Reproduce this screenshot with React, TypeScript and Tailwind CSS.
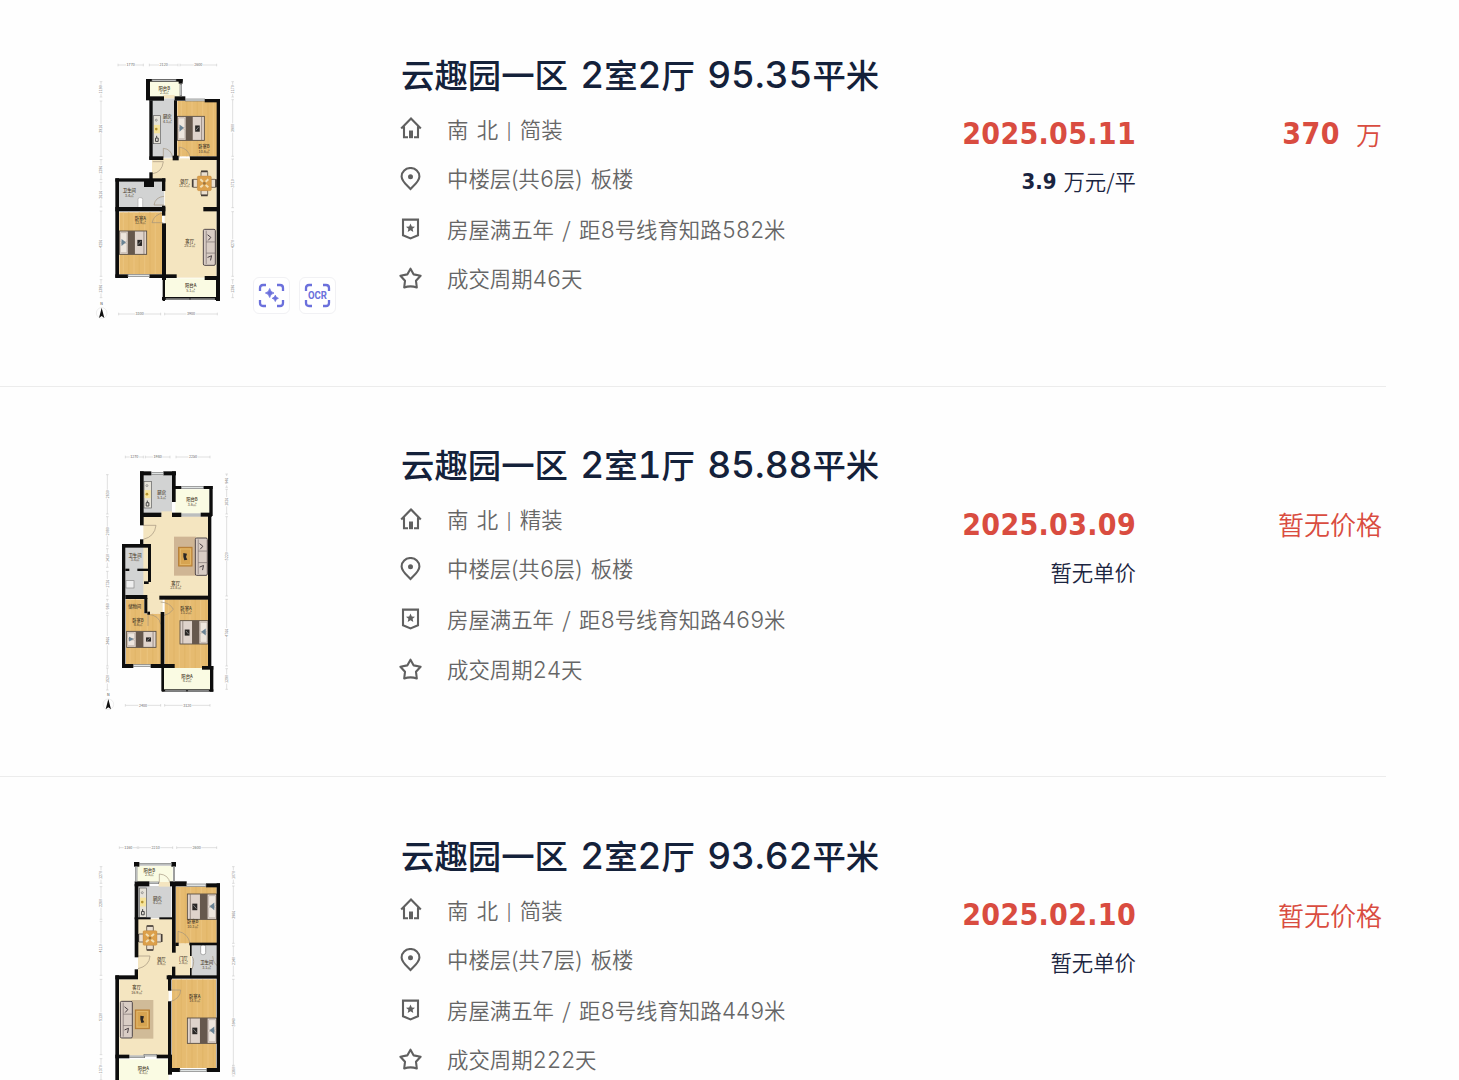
import { Fragment, type ReactNode } from "react";

type House = {
  id: number;
  title: string;
  orientation: string;
  floor: string;
  tags: string;
  cycle: string;
  date: string;
  price?: string;
  unitPrice?: string;
  plan: ReactNode;
};

const WALL = "#0d0d0d";
const WOOD = "#e6bb70";
const CREAM = "#f4e5c0";
const TILE = "#d2d3d3";
const BALCONY = "#fafbe3";

type Box = { x: number; y: number; w: number; h: number };

function Rects({ fill, list }: { fill: string; list: number[][] }) {
  return (
    <g fill={fill}>
      {list.map(([x, y, w, h], i) => (
        <rect key={i} x={x} y={y} width={w} height={h} />
      ))}
    </g>
  );
}

// Wood floor with thin vertical boards
function Wood({ x, y, w, h }: Box) {
  const boards = Array.from({ length: Math.floor(w / 16) }, (_, i) => x + 12 + i * 16);
  return (
    <g>
      <rect x={x} y={y} width={w} height={h} fill={WOOD} />
      {boards.map((bx, i) => (
        <path key={bx} d={`M${bx} ${y}V${y + h}`} stroke={i % 2 ? "#e0b365" : "#eec783"} strokeWidth="4" opacity="0.6" />
      ))}
    </g>
  );
}

// Window cut into a wall
function Windows({ list }: { list: number[][] }) {
  return (
    <g fill="#dfe3e3" stroke="#777" strokeWidth="2">
      {list.map(([x, y, w, h], i) => (
        <rect key={i} x={x} y={y} width={w} height={h} />
      ))}
    </g>
  );
}

// The bed is drawn with the pillows on the left, flip puts them on the right
function Bed({ x, y, w, h, flip }: Box & { flip?: boolean }) {
  return (
    <g transform={flip ? `translate(${x + w} ${y}) scale(-1 1)` : `translate(${x} ${y})`}>
      <rect width={w} height={h} fill="#dfd3cb" stroke="#4f463e" strokeWidth="2.5" />
      <rect x="3" y="5" width={w * 0.24} height={h / 2 - 7} rx="3" fill="#eee6de" stroke="#8e8176" />
      <rect x="3" y={h / 2 + 2} width={w * 0.24} height={h / 2 - 7} rx="3" fill="#eee6de" stroke="#8e8176" />
      <path d={`M${w * 0.08} ${h * 0.34}l${w * 0.16} ${h * 0.14}l-${w * 0.16} ${h * 0.16}z`} fill="#6b8496" />
      <rect x={w * 0.31} width={w * 0.26} height={h} fill="#66584d" />
      <rect x={w * 0.66} y={h * 0.38} width={w * 0.17} height={h * 0.26} fill="#292625" />
      <path d={`M${w * 0.69} ${h * 0.58}l${w * 0.1} -${h * 0.14}`} stroke="#aaa" strokeWidth="2" />
      <path d={`M${w * 0.9} 0V${h}`} stroke="#776a61" strokeWidth="2" />
    </g>
  );
}

function Sofa({ x, y, w, h }: Box) {
  return (
    <g transform={`translate(${x} ${y})`}>
      <rect width={w} height={h} rx="4" fill="#d9cdc5" stroke="#51484a" strokeWidth="3" />
      <path d={`M${w * 0.24} 4V${h - 4}M${w * 0.24} ${h * 0.35}H${w}M${w * 0.24} ${h * 0.66}H${w}`} stroke="#776c6c" strokeWidth="2" fill="none" />
      <path d={`M${w * 0.35} ${h * 0.15}l10 8l-8 9M${w * 0.35} ${h * 0.78}l12 -5l-3 14`} stroke="#494044" strokeWidth="3" fill="none" />
    </g>
  );
}

function DiningTable({ x, y }: { x: number; y: number }) {
  return (
    <g transform={`translate(${x} ${y})`}>
      <g fill="#eadfd0" stroke="#625447" strokeWidth="2.5">
        <rect x="-10" y="-36" width="20" height="16" rx="3" />
        <rect x="-10" y="20" width="20" height="16" rx="3" />
        <rect x="-35" y="-12" width="16" height="24" rx="3" />
        <rect x="19" y="-12" width="16" height="24" rx="3" />
      </g>
      <path d="M-10 -36h20M-10 36h20M-35 -12v24M35 -12v24" stroke="#463e38" strokeWidth="5" />
      <rect x="-21" y="-22" width="42" height="44" rx="4" fill="#dca04c" stroke="#bd7c32" />
      <path d="M-12 -12l8 7M12 -12l-8 7M-12 12l8 -7M12 12l-8 -7" stroke="#f1dfb5" strokeWidth="6" />
      <circle r="4" fill="#9b7643" />
    </g>
  );
}

function CoffeeTable({ x, y, w, h }: Box) {
  return (
    <g>
      <rect x={x} y={y} width={w} height={h} fill="#d7a451" stroke="#b37a30" strokeWidth="3" />
      <rect x={x + 5} y={y + 5} width={w - 10} height={h - 10} fill="none" stroke="#e8bf75" strokeWidth="2" />
      <path d={`M${x + w / 2 - 6} ${y + h / 2 - 11}l11 2l-3 10l4 8l-9 2l-3 -11z`} fill="#2b2725" />
    </g>
  );
}

function Stove({ x, y, w, h }: Box) {
  return (
    <g transform={`translate(${x} ${y})`}>
      <rect width={w} height={h} fill="#e6e3d9" stroke="#5c5c5c" strokeWidth="2" />
      <rect x="2" y={h * 0.33} width={w - 4} height={h * 0.3} fill="#f7e49b" />
      <circle cx={w * 0.4} cy={h * 0.48} r="4" fill="#b6942f" />
      <circle cx={w * 0.4} cy={h * 0.16} r="3" fill="none" stroke="#777" strokeWidth="2" />
      <path d={`M${w * 0.45} ${h * 0.72}v6M${w * 0.3} ${h * 0.8}h8v10h-8z`} stroke="#444" strokeWidth="3" fill="none" />
    </g>
  );
}

function Doors({ d }: { d: string }) {
  return <path d={d} fill="none" stroke="#a1927c" strokeWidth="2" />;
}

function Labels({ list }: { list: [number, number, string, string][] }) {
  return (
    <g fill="#4b3d2c" fontSize="13" textAnchor="middle">
      {list.map(([x, y, name, area]) => (
        <Fragment key={name + x + y}>
          <text x={x} y={y} fontWeight="500">
            {name}
          </text>
          <text x={x} y={y + 13} fontSize="11">
            {area}
          </text>
        </Fragment>
      ))}
    </g>
  );
}

type Span = [number, number, string];

type DimProps = {
  top: Span[];
  bottom?: Span[];
  left: Span[];
  right: Span[];
  leftX: number;
  rightX: number;
  topY: number;
  bottomY?: number;
};

// Measure lines around the plan
function Dimensions({ top, bottom = [], left, right, leftX, rightX, topY, bottomY = 777 }: DimProps) {
  const horizontal = (items: Span[], y: number) =>
    items.map(([from, to, label]) => {
      const mid = (from + to) / 2;
      return (
        <g key={`${from}-${y}`}>
          <path d={`M${from} ${y}H${mid - 14}M${mid + 14} ${y}H${to}M${from} ${y - 4}v8M${to} ${y - 4}v8`} />
          <text x={mid} y={y + 4}>
            {label}
          </text>
        </g>
      );
    });
  const vertical = (items: Span[], x: number) =>
    items.map(([from, to, label]) => {
      const mid = (from + to) / 2;
      return (
        <g key={`${from}-${x}`}>
          <path d={`M${x} ${from}V${mid - 14}M${x} ${mid + 14}V${to}M${x - 4} ${from}h8M${x - 4} ${to}h8`} />
          <text transform={`translate(${x + 4} ${mid}) rotate(-90)`}>{label}</text>
        </g>
      );
    });
  return (
    <g stroke="#c2c2c2" strokeWidth="1.5" fontSize="11" textAnchor="middle" className="[&_text]:fill-[#666] [&_text]:stroke-none">
      {horizontal(top, topY)}
      {horizontal(bottom, bottomY)}
      {vertical(left, leftX)}
      {vertical(right, rightX)}
    </g>
  );
}

function Compass({ x, y }: { x: number; y: number }) {
  return (
    <g transform={`translate(${x} ${y})`}>
      <circle r="16" fill="none" stroke="#ddd" strokeWidth="1.5" />
      <path d="M0 -16L8 15L0 9L-8 15z" fill="#111" />
      <text y="-24" textAnchor="middle" fontSize="11" fill="#333">
        N
      </text>
    </g>
  );
}

function PlanOne() {
  return (
    <>
      <Rects fill={BALCONY} list={[[178, 78, 94, 50], [222, 670, 160, 60]]} />
      <Rects fill={TILE} list={[[186, 130, 70, 178], [86, 380, 136, 78]]} />
      <Rects fill={CREAM} list={[[186, 310, 194, 65], [224, 370, 156, 298], [220, 120, 34, 10]]} />
      <Wood x={262} y={138} w={120} h={166} />
      <Wood x={88} y={472} w={128} h={186} />
      <Stove x={190} y={182} w={22} h={84} />
      <Bed x={262} y={184} w={81} h={72} />
      <Bed x={88} y={528} w={82} h={70} />
      <DiningTable x={343} y={385} />
      <Sofa x={340} y={523} w={36} h={108} />
      <rect x="144" y="428" width="14" height="32" rx="5" fill="#fff" stroke="#aaa" strokeWidth="2" />
      <Doors d="M220 308V280Q244 282 248 308M268 308V276Q298 282 300 308M188 356Q216 352 220 320H188M222 424Q196 426 192 450H222M220 474Q192 478 186 503H220" />
      <Rects
        fill={WALL}
        list={[
          [168, 72, 12, 64], [168, 72, 110, 8], [266, 72, 12, 14], [178, 124, 44, 13], [254, 124, 32, 13], [344, 132, 46, 10],
          [178, 136, 10, 178], [252, 136, 9, 172], [380, 132, 10, 592], [178, 304, 42, 11], [248, 302, 18, 14], [300, 304, 90, 11],
          [178, 352, 10, 24], [76, 370, 150, 10], [76, 370, 11, 298], [162, 378, 30, 18], [216, 370, 10, 38], [76, 456, 150, 13],
          [216, 452, 10, 30], [340, 456, 48, 13], [216, 505, 12, 170], [76, 658, 38, 11], [178, 658, 82, 11], [344, 663, 46, 12],
          [218, 670, 7, 68], [216, 726, 174, 9], [378, 670, 12, 68],
        ]}
      />
      <Windows list={[[186, 74, 72, 4], [286, 132, 58, 6], [270, 88, 5, 34], [114, 658, 64, 7], [228, 731, 70, 3], [302, 731, 72, 3]]} />
      <Labels
        list={[
          [223, 104, "阳台B", "2.3㎡"], [232, 190, "厨房", "4.1㎡"], [342, 280, "卧室B", "10.6㎡"], [283, 384, "餐厅", "12.2㎡"],
          [118, 412, "卫生间", "3.4㎡"], [151, 495, "卧室A", "12.9㎡"], [299, 564, "客厅", "25.2㎡"], [302, 697, "阳台A", "5.1㎡"],
        ]}
      />
      <Dimensions
        topY={30}
        leftX={33}
        rightX={428}
        top={[[84, 160, "1770"], [178, 264, "2120"], [270, 380, "2600"]]}
        bottom={[[86, 212, "3300"], [224, 382, "3900"]]}
        left={[[80, 126, "1190"], [138, 304, "3810"], [314, 374, "1280"], [382, 456, "2010"], [468, 664, "4250"], [674, 728, "1380"]]}
        right={[[80, 126, "1170"], [134, 304, "3900"], [312, 458, "3710"], [470, 664, "4270"], [674, 728, "1280"]]}
      />
      <Compass x={35} y={774} />
    </>
  );
}

function PlanTwo() {
  return (
    <>
      <Rects fill={TILE} list={[[160, 86, 86, 120], [106, 304, 70, 148]]} />
      <Rects fill={BALCONY} list={[[256, 130, 102, 72], [222, 660, 140, 72]]} />
      <Rects fill={CREAM} list={[[160, 212, 194, 238], [168, 380, 50, 120], [214, 196, 32, 20], [172, 440, 40, 62]]} />
      <Wood x={108} y={460} w={55} h={198} />
      <Wood x={160} y={503} w={54} h={155} />
      <Wood x={224} y={460} w={132} h={206} />
      <Stove x={162} y={106} w={22} h={80} />
      <rect x="252" y="272" width="66" height="117" fill="#cfb594" />
      <CoffeeTable x={266} y={304} w={40} h={56} />
      <Sofa x={316} y={276} w={36} h={112} />
      <Bed x={110} y={556} w={88} h={48} />
      <Bed x={270} y={524} w={84} h={70} flip />
      <rect x="108" y="404" width="24" height="22" fill="#eee" stroke="#888" strokeWidth="2" />
      <Doors d="M160 238H198Q194 272 160 280M212 468Q240 470 250 490Q238 506 222 508M174 540V505Q208 508 212 535" />
      <Rects
        fill={WALL}
        list={[
          [150, 76, 34, 12], [220, 76, 38, 12], [150, 76, 11, 162], [246, 76, 11, 92], [246, 120, 28, 9], [340, 120, 28, 9],
          [358, 120, 10, 90], [150, 200, 64, 13], [246, 200, 28, 13], [332, 200, 34, 12], [354, 206, 10, 454], [150, 280, 10, 18],
          [96, 294, 86, 11], [96, 294, 10, 370], [174, 294, 9, 84], [106, 368, 12, 7], [142, 368, 40, 7], [162, 406, 14, 8], [174, 374, 9, 34],
          [106, 447, 66, 12], [163, 456, 9, 46], [172, 497, 8, 9], [208, 449, 154, 12], [212, 498, 11, 164], [96, 654, 34, 12],
          [182, 654, 72, 12], [336, 660, 34, 11], [214, 664, 8, 72], [216, 730, 154, 7], [360, 660, 10, 77],
        ]}
      />
      <Windows list={[[184, 80, 36, 6], [274, 122, 66, 6], [274, 204, 58, 6], [130, 655, 52, 7], [226, 733, 62, 3], [294, 733, 62, 3]]} />
      <Labels
        list={[
          [215, 145, "厨房", "5.1㎡"], [306, 166, "阳台B", "3.6㎡"], [135, 332, "卫生间", "3.4㎡"], [257, 416, "客厅", "23.8㎡"],
          [134, 486, "储物间", ""], [144, 528, "卧室B", "8.6㎡"], [288, 491, "卧室A", "13.2㎡"], [291, 696, "阳台A", "4.2㎡"],
        ]}
      />
      <Dimensions
        topY={33}
        leftX={52}
        rightX={410}
        bottomY={778}
        top={[[106, 160, "1270"], [166, 240, "1980"], [258, 360, "2250"]]}
        bottom={[[106, 212, "2400"], [224, 360, "3120"]]}
        left={[[86, 204, "2630"], [212, 300, "2080"], [308, 364, "1410"], [376, 450, "1720"], [460, 502, "960"], [508, 660, "3400"], [666, 732, "1520"]]}
        right={[[84, 124, "940"], [130, 204, "1620"], [212, 450, "5220"], [460, 660, "4700"], [668, 730, "1280"]]}
      />
      <Compass x={55} y={775} />
    </>
  );
}

function PlanThree() {
  return (
    <>
      <Rects fill={BALCONY} list={[[142, 90, 106, 50], [86, 670, 150, 64]]} />
      <Rects fill={TILE} list={[[144, 150, 100, 96], [306, 328, 76, 92]]} />
      <Rects fill={CREAM} list={[[144, 248, 102, 184], [244, 322, 60, 98], [88, 430, 148, 228], [206, 138, 34, 14]]} />
      <Wood x={258} y={152} w={122} h={170} />
      <Wood x={246} y={430} w={132} h={266} />
      <Stove x={148} y={156} w={22} h={88} />
      <DiningTable x={180} y={306} />
      <Bed x={292} y={174} w={88} h={76} flip />
      <Bed x={292} y={546} w={88} h={76} flip />
      <rect x="124" y="492" width="66" height="116" fill="#d0bb98" />
      <CoffeeTable x={136} y={522} w={42} h={56} />
      <Sofa x={91} y={496} w={36} h={110} />
      <rect x="332" y="326" width="15" height="30" rx="6" fill="#fff" stroke="#888" strokeWidth="2" />
      <Doors d="M208 140V114Q236 116 240 142M264 322V286Q294 292 300 322M144 360H180Q178 390 144 398M238 462H272Q272 488 238 498M306 400Q316 372 306 362M368 360Q370 384 384 390" />
      <Rects
        fill={WALL}
        list={[
          [132, 78, 16, 14], [244, 78, 14, 14], [134, 136, 44, 15], [240, 136, 50, 15], [348, 142, 42, 12],
          [134, 144, 11, 220], [246, 144, 11, 206], [380, 142, 10, 558], [134, 244, 48, 6], [208, 244, 40, 6], [256, 320, 10, 10],
          [298, 320, 90, 8], [300, 326, 5, 34], [300, 396, 5, 26], [76, 418, 68, 12], [134, 400, 10, 26], [246, 392, 10, 34], [230, 418, 16, 12],
          [246, 418, 144, 10], [76, 418, 11, 320], [234, 418, 10, 46], [234, 496, 10, 186], [76, 656, 42, 11], [200, 656, 42, 11],
          [234, 656, 12, 60], [236, 696, 34, 12], [350, 696, 40, 12], [76, 732, 170, 8],
        ]}
      />
      <Windows list={[[148, 82, 96, 5], [137, 92, 4, 44], [250, 92, 4, 44], [178, 138, 28, 5], [290, 144, 58, 7], [118, 660, 46, 5], [162, 655, 38, 5], [270, 700, 80, 6], [88, 734, 146, 3]]} />
      <Labels
        list={[
          [178, 108, "阳台B", "2.5㎡"], [202, 192, "厨房", "4.2㎡"], [308, 262, "卧室B", "10.3㎡"], [214, 374, "餐厅", "8.9㎡"],
          [280, 372, "门厅", "2.8㎡"], [350, 385, "卫生间", "3.1㎡"], [140, 460, "客厅", "16.9㎡"], [314, 486, "卧室A", "14.5㎡"], [160, 702, "阳台A", "4.3㎡"],
        ]}
      />
      <Dimensions
        topY={35}
        leftX={33}
        rightX={430}
        top={[[88, 142, "1160"], [146, 248, "2210"], [260, 380, "2600"]]}
        left={[[92, 142, "1270"], [152, 250, "2260"], [256, 418, "4110"], [430, 656, "5130"], [668, 732, "1370"]]}
        right={[[92, 142, "1070"], [150, 322, "3960"], [330, 420, "2140"], [430, 688, "5940"], [690, 720, "1360"]]}
      />
    </>
  );
}

const houses: House[] = [
  {
    id: 1,
    title: "云趣园一区 2室2厅 95.35平米",
    orientation: "南 北 | 简装",
    floor: "中楼层(共6层) 板楼",
    tags: "房屋满五年 / 距8号线育知路582米",
    cycle: "成交周期46天",
    date: "2025.05.11",
    price: "370",
    unitPrice: "3.9",
    plan: <PlanOne />,
  },
  {
    id: 2,
    title: "云趣园一区 2室1厅 85.88平米",
    orientation: "南 北 | 精装",
    floor: "中楼层(共6层) 板楼",
    tags: "房屋满五年 / 距8号线育知路469米",
    cycle: "成交周期24天",
    date: "2025.03.09",
    plan: <PlanTwo />,
  },
  {
    id: 3,
    title: "云趣园一区 2室2厅 93.62平米",
    orientation: "南 北 | 简装",
    floor: "中楼层(共7层) 板楼",
    tags: "房屋满五年 / 距8号线育知路449米",
    cycle: "成交周期222天",
    date: "2025.02.10",
    plan: <PlanThree />,
  },
];

// Digits are set a little larger than the Chinese text around them
function MixedText({ text, digitClass }: { text: string; digitClass: string }) {
  return (
    <>
      {text.split(/([\d.]+|\|)/).map((part, i) => {
        if (i % 2 === 0) return part;
        return (
          <span key={i} className={part === "|" ? "relative -top-[2px] mx-[0.2px] text-[17px] font-normal" : digitClass}>
            {part}
          </span>
        );
      })}
    </>
  );
}

const icons = {
  home: (
    <>
      <path d="M1.2 12.6L11 2.4L20.8 12.6M4 10.5V21.2H8M18 10.5V21.2H14" />
      <path d="M9 14.5H13V22.2H9z" fill="currentColor" stroke="none" />
    </>
  ),
  pin: (
    <>
      <path d="M10.5 22C7 18.2 1.6 14.2 1.6 9.4A8.9 8.4 0 0 1 19.4 9.4C19.4 14.2 14 18.2 10.5 22Z" />
      <circle cx="10.5" cy="9.8" r="2.5" fill="currentColor" stroke="none" />
    </>
  ),
  badge: (
    <>
      <path d="M3 2.6H18V18.2L10.5 21.4L3 18.2Z" />
      <path d="M10.5 6.4l1.3 3 3.2.3-2.4 2.1.7 3.2-2.8-1.7-2.8 1.7.7-3.2L6 9.7l3.2-.3z" fill="currentColor" stroke="none" />
    </>
  ),
  star: <path d="M10.5 1.7L13.7 7.4L20.6 8.8L16 13.8L16.8 20.5Q10.5 18.2 4.2 20.5L5 13.8L.4 8.8L7.3 7.4Z" strokeLinejoin="round" />,
};

function DetailRow({ icon, text }: { icon: keyof typeof icons; text: string }) {
  return (
    <div className="flex h-[50.2px] items-center">
      <svg viewBox="-1 0 24 24" className="mr-6 h-6 w-6 shrink-0 text-[#606060]" fill="none" stroke="currentColor" strokeWidth="2.1">
        {icons[icon]}
      </svg>
      <p className={`text-[21.4px] leading-none font-[350] whitespace-nowrap text-[#666] [word-spacing:3.6px] ${icon === "badge" ? "pt-[1px]" : ""}`}>
        <MixedText text={text} digitClass="font-['Inter'] text-[22.5px] tracking-[-0.4px] font-light tabular-nums" />
      </p>
    </div>
  );
}

function ScanCorners() {
  return <path d="M2 8V5Q2 2 5 2H8M19 2H22Q25 2 25 5V8M25 17V20Q25 23 22 23H19M8 23H5Q2 23 2 20V17" fill="none" stroke="currentColor" strokeWidth="2.3" />;
}

function ImageTools() {
  const button = "flex h-[37px] w-[37px] items-center justify-center rounded-[6px] border border-[#f1f1f4] bg-white text-[#6b70dc]";
  return (
    <div className="absolute top-[281px] left-[253px] flex gap-[9px]">
      <button className={button} aria-label="smart scan">
        <svg viewBox="0 0 27 25" className="h-[25px] w-[27px] shrink-0">
          <ScanCorners />
          <path d="M11.7 5.5Q12.3 9.3 16 10Q12.3 10.7 11.7 14.5Q11 10.7 7.4 10Q11 9.3 11.7 5.5ZM17.3 12.2Q17.8 14.8 20.4 15.3Q17.8 15.8 17.3 18.5Q16.8 15.8 14.2 15.3Q16.8 14.8 17.3 12.2Z" fill="currentColor" stroke="currentColor" strokeWidth="0.8" />
        </svg>
      </button>
      <button className={button} aria-label="ocr">
        <svg viewBox="0 0 27 25" className="h-[25px] w-[27px] shrink-0">
          <ScanCorners />
          <text x="13.5" y="16" textAnchor="middle" textLength="19" lengthAdjust="spacingAndGlyphs" fontSize="10" className="fill-[#6b70dc] font-['Roboto'] font-bold">
            OCR
          </text>
        </svg>
      </button>
    </div>
  );
}

function HouseRow({ house, showTools }: { house: House; showTools: boolean }) {
  return (
    <li className="relative flex h-[390.5px] w-[1386px] border-b border-[#ececec]">
      <div className="w-[399px] shrink-0 pt-[59px] pl-[90px]">
        <svg viewBox="0 0 450 810" className="h-[270px] w-[150px]">
          {house.plan}
        </svg>
      </div>
      {showTools && <ImageTools />}

      <div className="w-[520px] shrink-0 pt-[53px]">
        <h2 className="mb-[4.4px] flex h-[50px] items-center pl-[2px] text-[33.4px] leading-none font-medium whitespace-pre text-[#14213a] [word-spacing:4.8px]">
          <span>
            <MixedText text={house.title} digitClass="font-['Inter'] text-[37px] tracking-[-0.1px] tabular-nums" />
          </span>
        </h2>
        <DetailRow icon="home" text={house.orientation} />
        <DetailRow icon="pin" text={house.floor} />
        <DetailRow icon="badge" text={house.tags} />
        <DetailRow icon="star" text={house.cycle} />
      </div>

      <div className="flex w-[217px] shrink-0 flex-col items-end pt-[120px]">
        <p className="font-['DejaVu_Sans_Condensed','DejaVu_Sans'] text-[30px] leading-[36px] font-bold tracking-[0.3px] [font-stretch:condensed] text-[#d94c40]">{house.date}</p>
        <p className="mt-[13px] flex h-8 items-center text-[21.4px] leading-none font-[350] whitespace-pre text-[#1a2440]">
          {house.unitPrice ? (
            <>
              <b className="mt-[1px] mr-[7px] font-['DejaVu_Sans_Condensed','DejaVu_Sans'] text-[22px] font-bold [font-stretch:condensed]">{house.unitPrice}</b>
              万元/平
            </>
          ) : (
            "暂无单价"
          )}
        </p>
      </div>

      <div className="flex flex-1 items-start justify-end pt-[118.6px] pr-[4px] text-[26px] leading-[38px] font-[350] text-[#d94c40]">
        {house.price ? (
          <>
            <b className="mt-[1.4px] mr-[16px] font-['DejaVu_Sans_Condensed','DejaVu_Sans'] text-[30px] leading-[36px] font-bold tracking-[0.5px] [font-stretch:condensed]">{house.price}</b>
            万
          </>
        ) : (
          "暂无价格"
        )}
      </div>
    </li>
  );
}

export default function App() {
  return (
    <main className="h-screen w-full overflow-hidden bg-[#fefefe] font-['Noto_Sans_CJK_SC',sans-serif]">
      <ul className="-mt-1">
        {houses.map((house, index) => (
          <HouseRow key={house.id} house={house} showTools={index === 0} />
        ))}
      </ul>
    </main>
  );
}
